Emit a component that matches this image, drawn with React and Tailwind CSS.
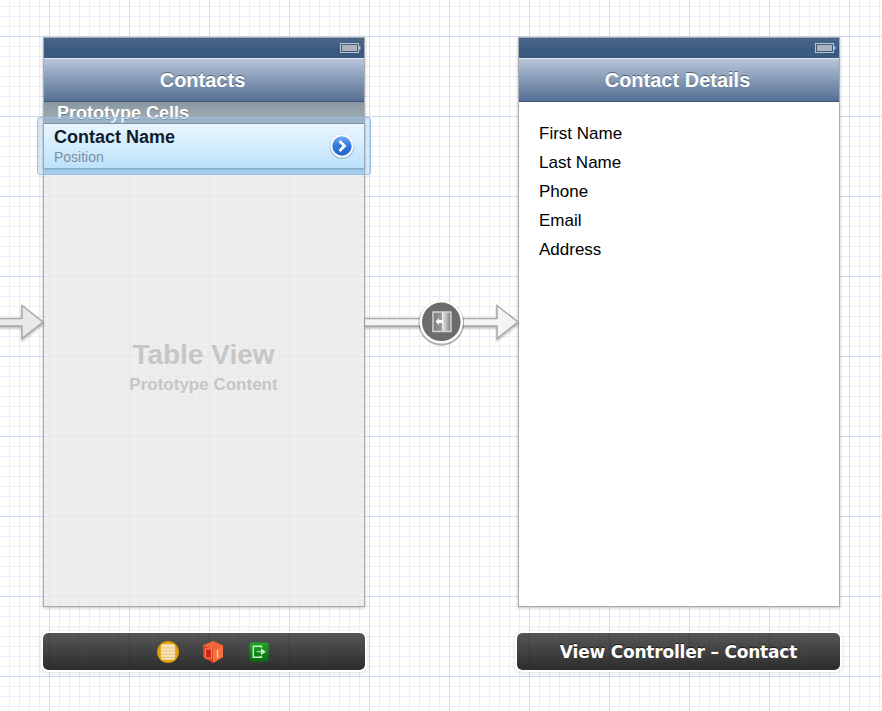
const gridBg =
  "bg-[repeating-linear-gradient(90deg,transparent_0_49px,#cadcf2_49px_50px,transparent_50px_80px),repeating-linear-gradient(180deg,transparent_0_36px,#cadcf2_36px_37px,transparent_37px_80px),repeating-linear-gradient(90deg,transparent_0_9px,#e6effb_9px_10px),repeating-linear-gradient(180deg,transparent_0_6px,#e6effb_6px_7px,transparent_7px_10px)]";
const tableGrid =
  "bg-[repeating-linear-gradient(90deg,transparent_0_49px,#e3e6ec_49px_50px,transparent_50px_80px),repeating-linear-gradient(180deg,transparent_0_36px,#e3e6ec_36px_37px,transparent_37px_80px),repeating-linear-gradient(90deg,transparent_0_9px,#eaeaea_9px_10px),repeating-linear-gradient(180deg,transparent_0_6px,#eaeaea_6px_7px,transparent_7px_10px)]";
const dockGrid =
  "bg-[repeating-linear-gradient(90deg,transparent_0_49px,rgba(0,0,0,0.1)_49px_50px,transparent_50px_80px),repeating-linear-gradient(90deg,transparent_0_9px,rgba(0,0,0,0.06)_9px_10px),repeating-linear-gradient(180deg,transparent_0_6px,rgba(0,0,0,0.06)_6px_7px,transparent_7px_10px),linear-gradient(180deg,#575757_633px,#2d2d2d_670px)]";

function Battery() {
  return (
    <svg width="21" height="11" viewBox="0 0 21 11" className="block">
      <rect x="0.5" y="0.5" width="18" height="9" fill="none" stroke="#b9c6d8" />
      <rect x="2" y="2" width="15" height="6" fill="#aeb3bb" />
      <rect x="19" y="3.5" width="1.5" height="3" fill="#b9c6d8" />
    </svg>
  );
}

function NavBar({ title }) {
  return (
    <>
      <div className="h-5 flex items-center justify-end pr-[3px] bg-[linear-gradient(#4b6689,#3a5a80_60%)]">
        <Battery />
      </div>
      <div className="h-11 flex items-center justify-center pr-[3px] border-t border-t-[#dfe6ef] border-b border-b-[#3e5675] bg-[linear-gradient(#b8c6da,#8499b4_50%,#566f95)] text-white text-[20px] font-bold [text-shadow:0_-1px_0_rgba(40,55,80,0.6)]">
        {title}
      </div>
    </>
  );
}

function DisclosureButton() {
  return (
    <svg width="26" height="26" viewBox="0 0 26 26">
      <defs>
        <linearGradient id="disc" x1="0" y1="0" x2="0" y2="1">
          <stop offset="0" stopColor="#74aaf0" />
          <stop offset="0.5" stopColor="#3079de" />
          <stop offset="1" stopColor="#2463c4" />
        </linearGradient>
      </defs>
      <circle cx="13" cy="13.8" r="12.2" fill="#7f9bb5" opacity="0.55" />
      <circle cx="13" cy="13" r="11.5" fill="#ffffff" />
      <circle cx="13" cy="13" r="9.7" fill="url(#disc)" />
      <path d="M10.5 8 L15.5 13 L10.5 18" fill="none" stroke="#ffffff" strokeWidth="2.8" />
    </svg>
  );
}

function CoinIcon() {
  return (
    <svg width="22" height="22" viewBox="0 0 24 24">
      <circle cx="12" cy="12" r="12" fill="#d99a05" />
      <circle cx="12" cy="12" r="10" fill="#e8ad2e" />
      <rect x="4.5" y="3.5" width="15" height="17" rx="1" fill="#f6e2b4" />
      <path d="M4.5 7.5H19.5M4.5 11H19.5M4.5 14.5H19.5M4.5 18H19.5" stroke="#e5c27e" />
    </svg>
  );
}

function CubeIcon() {
  return (
    <svg width="20" height="22" viewBox="0 0 20 22">
      <path d="M10 0 L20 4.5 V16 L10 22 L0 16 V4.5 Z" fill="#e2431f" />
      <path d="M10 0 L20 4.5 L10 8 L0 4.5 Z" fill="#f0643a" />
      <path d="M10 8 L20 4.5 V16 L10 22 Z" fill="#f2713f" />
      <rect x="2.5" y="8" width="6" height="9" fill="#c9261a" stroke="#f58a62" />
      <path d="M14.5 9 V17" stroke="#ffd2b8" strokeWidth="1.2" />
    </svg>
  );
}

function ExitIcon() {
  return (
    <svg width="20" height="20" viewBox="0 0 21 21">
      <defs>
        <linearGradient id="exit" x1="0" y1="0" x2="0" y2="1">
          <stop offset="0" stopColor="#1fa62c" />
          <stop offset="1" stopColor="#0a6b12" />
        </linearGradient>
      </defs>
      <rect x="0.5" y="0.5" width="20" height="20" rx="2.5" fill="url(#exit)" />
      <path d="M13 6 V4.5 H4.5 V16 H13 V14.5" fill="none" stroke="#c4f0bc" strokeWidth="1.5" />
      <path d="M8 10.2 H14 M13 7.4 L17 10.2 L13 13 Z" fill="#c4f0bc" stroke="#c4f0bc" />
    </svg>
  );
}

function SegueBadge() {
  return (
    <svg width="48" height="48" viewBox="0 0 48 48">
      <defs>
        <linearGradient id="doorLeft" x1="0" y1="0" x2="1" y2="0">
          <stop offset="0" stopColor="#7c7c7c" />
          <stop offset="1" stopColor="#9c9c9c" />
        </linearGradient>
        <linearGradient id="doorRight" x1="0" y1="0" x2="1" y2="0">
          <stop offset="0" stopColor="#f0f0f0" />
          <stop offset="1" stopColor="#7c7c7c" />
        </linearGradient>
      </defs>
      <circle cx="24.3" cy="25" r="22.8" fill="#000000" opacity="0.3" />
      <circle cx="24.3" cy="23.8" r="21.8" fill="#ffffff" />
      <circle cx="24.3" cy="23.8" r="19.3" fill="#6c6c6c" />
      <rect x="16" y="14" width="9" height="19.5" fill="url(#doorLeft)" />
      <rect x="25" y="14" width="9" height="19.5" fill="url(#doorRight)" />
      <rect x="16" y="14" width="18" height="19.5" fill="none" stroke="#d2d2d2" strokeWidth="1.5" />
      <path d="M18.5 23.5 L22 20 V22 H25.5 V25 H22 V27 Z" fill="#ffffff" />
    </svg>
  );
}

function Arrow({ width, fill }) {
  const head = width - 22;
  return (
    <svg width={width} height="38" viewBox={`0 0 ${width} 38`} className="block drop-shadow-[0_2px_1px_rgba(0,0,0,0.25)]">
      <path
        d={`M-2 15.5 H${head} V2.5 L${width - 1} 19 L${head} 35.5 V23 H-2 Z`}
        fill={fill}
        stroke="#a9a9a9"
        strokeWidth="1.5"
      />
    </svg>
  );
}

function Scene({ nav, children }) {
  return (
    <div className="w-[322px] h-[570px] flex flex-col relative border border-[#a8abb0] shadow-[0_1px_3px_rgba(0,0,0,0.25)]">
      <NavBar title={nav} />
      {children}
    </div>
  );
}

function DockBar({ className, children }) {
  return (
    <div className={`h-[37px] mt-[26px] flex items-center justify-center rounded-[5px] outline-2 outline-white shadow-[0_1px_4px_2px_rgba(120,130,150,0.25)] bg-fixed ${dockGrid} ${className}`}>
      {children}
    </div>
  );
}

const details = ["First Name", "Last Name", "Phone", "Email", "Address"];

export default function App() {
  return (
    <div className={`relative w-[882px] h-[711px] overflow-hidden bg-white bg-fixed ${gridBg} font-['Liberation_Sans',Arial,sans-serif]`}>
      <div className="flex pt-[37px] pl-[43px] gap-[153px]">
        <div className="flex flex-col">
          <Scene nav="Contacts">
            <div className="h-[21px] overflow-hidden pl-[13px] pt-[1px] bg-[linear-gradient(#8897a2,#a6b1b6)] text-white text-[18px] leading-[21px] font-bold [text-shadow:0_1px_0_rgba(70,80,90,0.5)]">
              Prototype Cells
            </div>
            <div className="relative h-[51px]">
              {/* selection frame sticks out of the scene */}
              <div className="absolute -left-[7px] -right-[7px] -top-[6px] -bottom-px rounded-[3px] border border-[#9dbde5] bg-[#8dbcec]/30"></div>
              <div className="absolute left-0 right-0 top-[45px] bottom-0 bg-[#a6cde9]"></div>
              <div className="relative h-[45px] flex items-center justify-between pl-[10px] pr-[9px] border-t border-t-[#7d8f9c] bg-[linear-gradient(#eaf6fe,#bce1fb)] shadow-[0_1px_2px_rgba(70,110,150,0.5)]">
                <div className="flex flex-col pt-[1px]">
                  <span className="text-[18px] leading-[21px] font-bold text-[#101c2b]">Contact Name</span>
                  <span className="text-[14px] leading-[18px] text-[#7e8e9e]">Position</span>
                </div>
                <DisclosureButton />
              </div>
            </div>
            <div className={`flex-1 flex flex-col items-center justify-center pb-[46px] pr-[1px] bg-[#eeeeee] bg-fixed ${tableGrid}`}>
              <span className="text-[28px] leading-[32px] font-bold text-[#c6c6c6]">Table View</span>
              <span className="text-[17px] leading-[20px] mt-[4px] font-bold text-[#c6c6c6]">Prototype Content</span>
            </div>
          </Scene>
          <DockBar className="w-[322px]">
            <div className="flex items-center pl-[18px]">
              <CoinIcon />
              <div className="ml-[24px]">
                <CubeIcon />
              </div>
              <div className="ml-[26px]">
                <ExitIcon />
              </div>
            </div>
          </DockBar>
        </div>

        <div className="flex flex-col">
          <Scene nav="Contact Details">
            <div className="flex-1 bg-white pt-[17px] pl-[20px] text-[17px] leading-[29px] text-black">
              {details.map((d) => (
                <div key={d}>{d}</div>
              ))}
            </div>
          </Scene>
          <DockBar className="w-[323px] -ml-px">
            <span className="mt-[2px] font-['DejaVu_Sans',sans-serif] text-[17px] font-bold text-white tracking-[-0.2px] [text-shadow:0_-1px_0_rgba(0,0,0,0.6)]">
              View Controller – Contact
            </span>
          </DockBar>
        </div>
      </div>

      {/* segue connectors on the storyboard canvas */}
      <div className="absolute left-0 top-[303px]">
        <Arrow width={44} fill="#e9e9e9" />
      </div>
      <div className="absolute left-[365px] top-[303px]">
        <Arrow width={154} fill="#f4f4f4" />
      </div>
      <div className="absolute left-[417px] top-[298px]">
        <SegueBadge />
      </div>
    </div>
  );
}
